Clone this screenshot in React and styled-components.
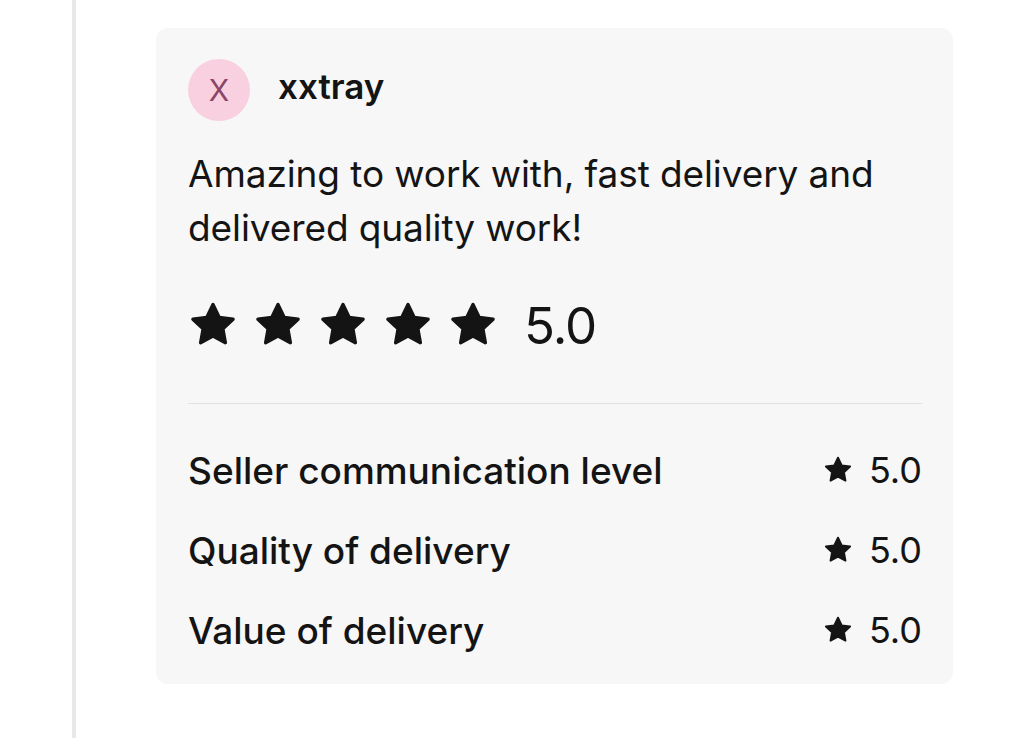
import styled, { createGlobalStyle } from "styled-components";

const GlobalStyle = createGlobalStyle`
  html, body {
    margin: 0;
    padding: 0;
    background: #ffffff;
  }
  body {
    font-family: "Inter", "Noto Sans", sans-serif;
    color: #141414;
  }
`;

const Page = styled.div`
  min-height: 738px;
  margin-left: 72px;
  border-left: 4px solid #e8e8e8;
  padding: 28px 0 0 80px;
  box-sizing: border-box;
`;

const Card = styled.div`
  width: 797px;
  height: 656px;
  box-sizing: border-box;
  background: #f7f7f7;
  border-radius: 12px;
  padding: 31px 31px 0 32px;
  display: flex;
  flex-direction: column;
`;

const Header = styled.div`
  display: flex;
  align-items: center;
  gap: 28px;
  height: 62px;
`;

const Avatar = styled.div`
  width: 62px;
  height: 62px;
  border-radius: 50%;
  background: #f9d0df;
  color: #8a4566;
  display: flex;
  align-items: center;
  justify-content: center;
  font-size: 30px;
  font-weight: 400;
`;

const Name = styled.div`
  font-size: 35px;
  font-weight: 600;
  margin-top: -8px;
`;

const Comment = styled.p`
  margin: 26px 0 0;
  font-size: 37px;
  line-height: 54px;
  font-weight: 400;
  letter-spacing: -0.1px;
`;

const Overall = styled.div`
  display: flex;
  align-items: center;
  gap: 15px;
  height: 50px;
  margin-top: 45px;
`;

const Score = styled.span`
  font-size: 51px;
  line-height: 1;
  font-weight: 400;
  margin-left: 11px;
  letter-spacing: -1px;
`;

const Divider = styled.hr`
  border: none;
  height: 1px;
  background: #e2e2e2;
  margin: 53px 0 0;
`;

const Criteria = styled.div`
  display: flex;
  flex-direction: column;
  margin-top: 26px;
`;

const Row = styled.div`
  display: flex;
  align-items: center;
  justify-content: space-between;
  height: 80px;
`;

const Label = styled.span`
  font-size: 37px;
  font-weight: 500;
`;

const Value = styled.span`
  display: flex;
  align-items: center;
  gap: 16px;
  font-size: 36px;
  font-weight: 400;
`;

const Star = ({ size }) => (
  <svg width={size} height={size} viewBox="0 0 24 24" fill="#141414">
    <path
      d="M12 2.2l2.95 6.1 6.7.9-4.9 4.65 1.2 6.65L12 17.3l-5.95 3.2 1.2-6.65L2.35 9.2l6.7-.9z"
      stroke="#141414"
      strokeWidth="1.6"
      strokeLinejoin="round"
    />
  </svg>
);

const criteria = [
  "Seller communication level",
  "Quality of delivery",
  "Value of delivery",
];

export default function App() {
  return (
    <>
      <GlobalStyle />
      <Page>
        <Card>
          <Header>
            <Avatar>X</Avatar>
            <Name>xxtray</Name>
          </Header>
          <Comment>
            Amazing to work with, fast delivery and
            <br />
            delivered quality work!
          </Comment>
          <Overall>
            {[0, 1, 2, 3, 4].map((i) => (
              <Star key={i} size={50} />
            ))}
            <Score>5.0</Score>
          </Overall>
          <Divider />
          <Criteria>
            {criteria.map((c) => (
              <Row key={c}>
                <Label>{c}</Label>
                <Value>
                  <Star size={30} />
                  5.0
                </Value>
              </Row>
            ))}
          </Criteria>
        </Card>
      </Page>
    </>
  );
}
